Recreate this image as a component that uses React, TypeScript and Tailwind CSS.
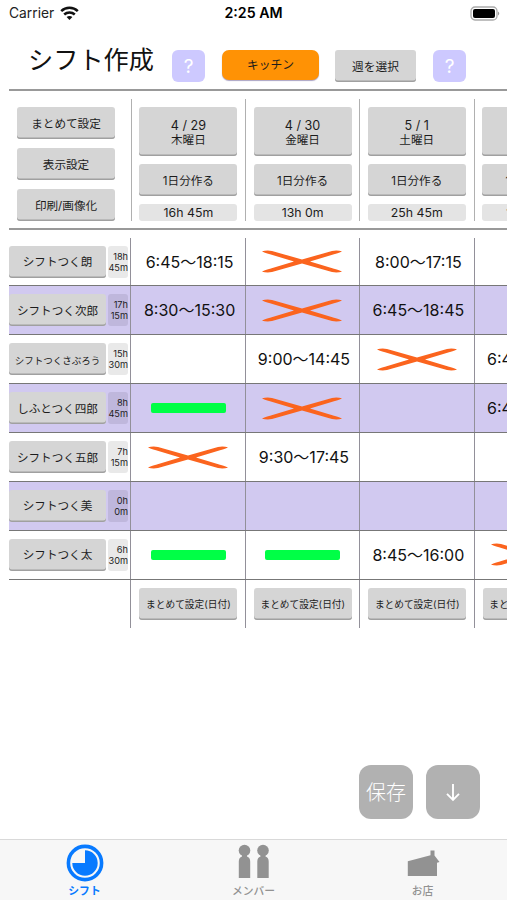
import type { ReactNode } from "react";
import { clsx } from "clsx";

interface Day {
  date: string;
  weekday: string;
  total: string;
}

interface Member {
  name: string;
  hours: string;
  minutes: string;
  small?: boolean;
  // "x" = day off, "free" = available all day, "" = nothing set
  shifts: string[];
}

const days: Day[] = [
  { date: "4 / 29", weekday: "木曜日", total: "16h 45m" },
  { date: "4 / 30", weekday: "金曜日", total: "13h 0m" },
  { date: "5 / 1", weekday: "土曜日", total: "25h 45m" },
  { date: "5 / 2", weekday: "日曜日", total: "13h 30m" },
];

const members: Member[] = [
  { name: "シフトつく朗", hours: "18h", minutes: "45m", shifts: ["6:45〜18:15", "x", "8:00〜17:15", ""] },
  { name: "シフトつく次郎", hours: "17h", minutes: "15m", shifts: ["8:30〜15:30", "x", "6:45〜18:45", ""] },
  { name: "シフトつくさぶろう", hours: "15h", minutes: "30m", small: true, shifts: ["", "9:00〜14:45", "x", "6:45〜15:30"] },
  { name: "しふとつく四郎", hours: "8h", minutes: "45m", shifts: ["free", "x", "", "6:45〜15:30"] },
  { name: "シフトつく五郎", hours: "7h", minutes: "15m", shifts: ["x", "9:30〜17:45", "", ""] },
  { name: "シフトつく美", hours: "0h", minutes: "0m", shifts: ["", "", "", ""] },
  { name: "シフトつく太", hours: "6h", minutes: "30m", shifts: ["free", "free", "8:45〜16:00", "x"] },
];

export default function App() {
  return (
    <div className="flex h-[900px] w-[507px] flex-col overflow-hidden bg-white font-['Inter','Noto_Sans_CJK_JP',sans-serif] text-[#1c1c1c]">
      <StatusBar />

      {/* Title bar */}
      <header className="ml-[9px] flex h-[63px] shrink-0 items-start border-b-2 border-[#999]">
        <h1 className="ml-[19px] mt-[16px] w-[144px] whitespace-nowrap text-[25.2px] leading-[32px] text-[#111]">シフト作成</h1>
        <HelpButton />
        <button className="ml-[17px] mt-[22px] h-[30px] w-[97px] rounded-[7px] bg-[#ff9205] pt-px text-[11.8px] leading-[29px] shadow-[0_1px_1px_#aaa3c4]">
          キッチン
        </button>
        <GrayButton className="ml-[16px] mr-[17px] mt-[22px] h-8 w-[81px] text-[11.7px]">週を選択</GrayButton>
        <HelpButton />
      </header>

      {/* Actions and day headers */}
      <section className="ml-[9px] flex h-[139px] shrink-0 overflow-hidden border-b-2 border-[#999] pt-[8px]">
        <div className="flex w-[122px] shrink-0 flex-col gap-[9px] pl-2 pt-2">
          {["まとめて設定", "表示設定", "印刷/画像化"].map((label) => (
            <GrayButton key={label} className="h-8 w-[98px] text-[11.6px]">{label}</GrayButton>
          ))}
        </div>
        {days.map((day) => (
          <div key={day.date} className="flex h-[122px] w-[114.2px] shrink-0 flex-col gap-2 border-l border-[#b0b0b0] pl-[7.4px] pt-2">
            <GrayButton className="h-[49px] w-[98px] text-[11.6px]">
              <span className="block text-[12.6px] leading-[15px]">{day.date}</span>
              <span className="block leading-[15px]">{day.weekday}</span>
            </GrayButton>
            <GrayButton className="h-8 w-[98px] text-[11.6px]">1日分作る</GrayButton>
            <div className="h-[17px] w-[98px] rounded-[3px] bg-[#e4e4e4] text-center text-[12.3px] leading-[18px]">{day.total}</div>
          </div>
        ))}
      </section>

      {/* Shift table */}
      <section className="ml-[9px] mt-[7.6px] shrink-0 overflow-hidden">
        {members.map((member, i) => (
          <div key={member.name} className={clsx("flex h-[48.9px] border-b border-[#777]", i % 2 === 1 && "bg-[#d1c9f0]")}>
            <div className="flex w-[121.4px] shrink-0 items-center gap-[2px]">
              <GrayButton className={clsx("h-8 w-[97px] shrink-0", member.small ? "text-[9.5px]" : "text-[11.6px]")}>
                {member.name}
              </GrayButton>
              <div
                className={clsx(
                  "flex h-8 w-5 flex-col items-end justify-center rounded-[3px] text-[9.2px] leading-[11px]",
                  i % 2 === 1 ? "bg-[#bfb7dc]" : "bg-[#e9e9e9]"
                )}
              >
                <span>{member.hours}</span>
                <span>{member.minutes}</span>
              </div>
            </div>
            {member.shifts.map((shift, j) => (
              <div key={j} className="flex w-[114.4px] shrink-0 items-center justify-center border-l border-[#929099]">
                <ShiftCell shift={shift} />
              </div>
            ))}
          </div>
        ))}
        <div className="flex h-12 pl-[121.4px]">
          {days.map((day) => (
            <div key={day.date} className="w-[114.4px] shrink-0 border-l border-[#929099] pl-2 pt-2">
              <GrayButton className="h-8 w-[98px] text-[9.7px]">まとめて設定(日付)</GrayButton>
            </div>
          ))}
        </div>
      </section>

      <div className="mt-auto flex shrink-0 justify-end gap-[13px] pb-5 pr-[27px]">
        <button className="h-[54px] w-[54px] rounded-xl bg-[#b1b1b1] pt-px text-[20px] font-light leading-[54px] text-white">保存</button>
        <button className="flex h-[54px] w-[54px] items-center justify-center rounded-xl bg-[#b1b1b1]">
          <svg width="16" height="20" viewBox="0 0 16 20" fill="none" stroke="white" strokeWidth="1.9">
            <path d="M8 2v15.5M2 11.8l6 6 6-6" />
          </svg>
        </button>
      </div>

      <TabBar />
    </div>
  );
}

function StatusBar() {
  return (
    <div className="mb-0.5 grid h-[26px] shrink-0 grid-cols-3 items-center px-[9px] text-[#222]">
      <div className="flex items-center gap-[6px]">
        <span className="text-[13.8px] leading-5">Carrier</span>
        <svg width="19" height="15" viewBox="0 0 19 15" fill="none" stroke="#111" strokeWidth="2.5">
          <path d="M1.2 5.2C5.8.7 13.2.7 17.8 5.2" />
          <path d="M4.2 8.5c3-2.8 7.6-2.8 10.6 0" />
          <path d="M6.6 11c1.7-1.5 4.1-1.5 5.8 0L9.5 14z" fill="#111" stroke="none" />
        </svg>
      </div>
      <span className="text-center text-[14.2px] font-semibold leading-5 text-black">2:25 AM</span>
      <svg className="-mr-[3px] justify-self-end" width="31" height="15" viewBox="0 0 31 15">
        <rect x="1" y="1" width="26" height="13" rx="4" fill="white" stroke="#aaa" strokeWidth="1.3" />
        <rect x="3" y="3" width="22" height="9" rx="2" fill="black" />
        <path d="M28 5.5q2.5 2 0 4z" fill="#999" />
      </svg>
    </div>
  );
}

function GrayButton({ className, children }: { className?: string; children: ReactNode }) {
  return (
    <button
      className={clsx(
        "block whitespace-nowrap rounded-[3px] bg-[#d5d5d5] pt-[2px] text-center leading-[15px] shadow-[inset_0_-1.5px_0_#a0a0a0]",
        className
      )}
    >
      {children}
    </button>
  );
}

function HelpButton() {
  return <button className="mt-[22px] h-8 w-[33px] shrink-0 rounded-[6px] bg-[#cdc9ff] text-[19px] leading-[31px] text-white">?</button>;
}

function ShiftCell({ shift }: { shift: string }) {
  if (shift === "x") {
    return (
      <svg width="82" height="23" viewBox="0 0 82 23" fill="#fb641e">
        <path d="M1 1.200Q6 0 11 .9L41 9.600 71 .9Q76 0 81 1.200 79 2.600 73 4.200L49 11.500 73 18.800Q79 20.400 81 21.800 76 23 71 22.100L41 13.400 11 22.100Q6 23 1 21.800 3 20.400 9 18.800L33 11.500 9 4.200Q3 2.600 1 1.200z" />
      </svg>
    );
  }
  if (shift === "free") {
    return <div className="h-[10px] w-[75px] rounded-[2px] bg-[#00ff46]" />;
  }
  return <span className="whitespace-nowrap pl-[3px] text-[16px] text-[#111]">{shift}</span>;
}

function TabBar() {
  return (
    <nav className="grid h-[61px] shrink-0 grid-cols-3 border-t border-[#d9d9d9] bg-[#f7f7f7] text-[10.8px] font-medium leading-[14px] text-[#929292]">
      <div className="flex flex-col items-center gap-[3px] pt-1">
        <svg width="38" height="38" viewBox="0 0 38 38">
          <circle cx="19" cy="19" r="16.6" fill="#f7f7f7" stroke="#087aff" strokeWidth="3.6" />
          <path d="M19 19H6.3A12.7 12.7 0 1 0 19 6.3z" fill="#087aff" />
        </svg>
        <span className="font-bold text-[#087aff]">シフト</span>
      </div>
      <div className="flex flex-col items-center gap-[3px] pt-1">
        <svg width="38" height="38" viewBox="0 0 38 38" fill="#929292">
          <circle cx="9.5" cy="6.5" r="5.8" />
          <path d="M7 10h5v2.5q3.2 1.2 3.2 5V34H3.8V17.5q0-3.8 3.2-5z" />
          <circle cx="28" cy="6.5" r="5.8" />
          <path d="M25.5 10h5v2.5q3.2 1.2 3.2 5V34H22.300V17.5q0-3.8 3.2-5z" />
        </svg>
        <span>メンバー</span>
      </div>
      <div className="flex flex-col items-center gap-[3px] pt-1">
        <svg width="38" height="38" viewBox="0 0 38 38" fill="#929292">
          <path d="M3.8 17.3 26.5 11.3V6.5h4v5l5 6.5-2.5.8V32H3.8z" />
        </svg>
        <span>お店</span>
      </div>
    </nav>
  );
}
